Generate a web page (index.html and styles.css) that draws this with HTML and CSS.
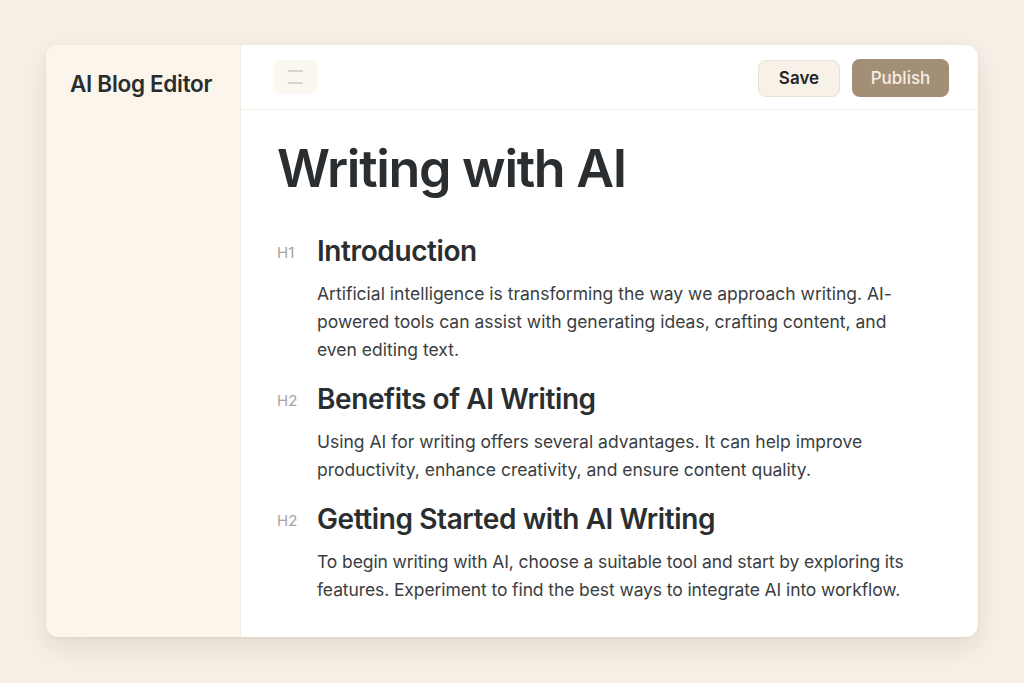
FILE: index.html
```html
<!DOCTYPE html>
<html lang="en">
<head>
<meta charset="utf-8">
<title>AI Blog Editor</title>
<link rel="stylesheet" href="styles.css">
</head>
<body>
<div class="app">
  <aside class="sidebar">
    <div class="brand">AI Blog Editor</div>
  </aside>
  <main class="main">
    <header class="topbar">
      <button class="menu-btn" aria-label="Menu">
        <span class="menu-line"></span>
        <span class="menu-line"></span>
      </button>
      <div class="actions">
        <button class="btn btn-save">Save</button>
        <button class="btn btn-publish">Publish</button>
      </div>
    </header>
    <article class="doc">
      <h1 class="doc-title">Writing with AI</h1>
      <section class="block">
        <div class="block-head">
          <span class="tag">H1</span>
          <h2 class="heading">Introduction</h2>
        </div>
        <p class="para">Artificial intelligence is transforming the way we approach writing. AI-powered tools can assist with generating ideas, crafting content, and even editing text.</p>
      </section>
      <section class="block">
        <div class="block-head">
          <span class="tag">H2</span>
          <h2 class="heading">Benefits of AI Writing</h2>
        </div>
        <p class="para">Using AI for writing offers several advantages. It can help improve productivity, enhance creativity, and ensure content quality.</p>
      </section>
      <section class="block">
        <div class="block-head">
          <span class="tag">H2</span>
          <h2 class="heading">Getting Started with AI Writing</h2>
        </div>
        <p class="para para-tight">To begin writing with AI, choose a suitable tool and start by exploring its features. Experiment to find the best ways to integrate AI into workflow.</p>
      </section>
    </article>
  </main>
</div>
</body>
</html>
```

FILE: styles.css
```css
* { box-sizing: border-box; }
html, body { margin: 0; padding: 0; }
body {
  background: #f6f0e7;
  font-family: Inter, "Noto Sans", sans-serif;
  color: #2b2f31;
  width: 1024px;
  height: 683px;
  padding: 45px 46px 46px 46px;
}
.app {
  display: flex;
  width: 932px;
  height: 592px;
  background: #ffffff;
  border-radius: 12px;
  overflow: hidden;
  box-shadow: 0 10px 28px rgba(130, 105, 70, 0.16), 0 1px 3px rgba(130, 105, 70, 0.10);
}
.sidebar {
  width: 195px;
  flex: none;
  background: #fcf5eb;
  border-right: 1px solid #f1ebe2;
  padding: 25px 0 0 24px;
}
.brand {
  font-size: 22.5px;
  font-weight: 600;
  letter-spacing: -0.3px;
  color: #2a2d2f;
  line-height: 28px;
}
.main {
  flex: 1;
  display: flex;
  flex-direction: column;
  min-width: 0;
}
.topbar {
  height: 65px;
  flex: none;
  display: flex;
  align-items: center;
  justify-content: space-between;
  padding: 0 29px 0 32px;
  border-bottom: 1px solid #f2eee8;
}
.menu-btn {
  width: 45px;
  height: 34px;
  border: none;
  border-radius: 8px;
  background: #fbf7f1;
  display: flex;
  flex-direction: column;
  align-items: center;
  justify-content: center;
  gap: 10px;
  padding: 0;
}
.menu-line {
  display: block;
  width: 15px;
  height: 2px;
  background: #dcd4ca;
  border-radius: 1px;
}
.actions {
  display: flex;
  gap: 12px;
  align-items: center;
  padding-top: 2px;
}
.btn {
  font-family: Inter, "Noto Sans", sans-serif;
  font-size: 17px;
  border-radius: 8px;
  cursor: pointer;
}
.btn-save {
  width: 82px;
  height: 37px;
  background: #f8f1e7;
  border: 1px solid #e9e0d3;
  color: #232527;
  font-weight: 600;
}
.btn-publish {
  width: 97px;
  height: 38px;
  background: #a38e76;
  border: none;
  color: #f7efe5;
  font-weight: 500;
}
.doc {
  padding: 28px 40px 0 36px;
}
.doc-title {
  margin: 0 0 33px 0;
  font-size: 52px;
  line-height: 62px;
  font-weight: 600;
  letter-spacing: -1.3px;
  color: #2a2e30;
}
.block {
  margin-bottom: 17px;
}
.block-head {
  display: flex;
  align-items: center;
}
.tag {
  width: 40px;
  flex: none;
  font-size: 15px;
  color: #aaa29a;
  padding-top: 2px;
}
.heading {
  margin: 0;
  font-size: 28px;
  line-height: 36px;
  font-weight: 600;
  letter-spacing: -0.4px;
  color: #2a2e30;
}
.para {
  margin: 11px 0 0 40px;
  font-size: 17.5px;
  line-height: 28px;
  color: #3a3e41;
  max-width: 595px;
}
.para-tight {
  letter-spacing: -0.1px;
}
```
